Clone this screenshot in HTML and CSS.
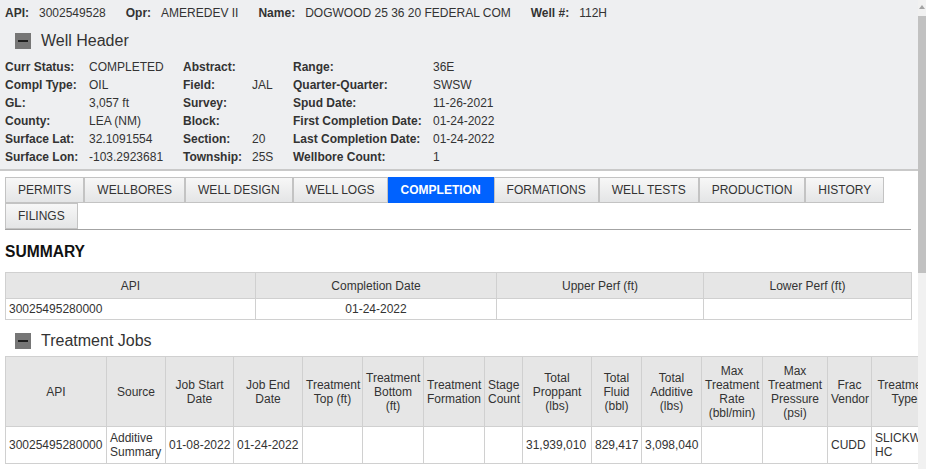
FILE: index.html
```html
<!DOCTYPE html>
<html lang="en">
<head>
    <meta charset="UTF-8">
    <meta name="viewport" content="width=device-width, initial-scale=1.0">
    <title>Well Detail - Completion</title>
    <link rel="stylesheet" href="styles.css">
</head>
<body>
<div class="page">
    <div class="content">

        <div class="well-top">
            <div class="id-line">
                <b>API:</b><span>3002549528</span>
                <b>Opr:</b><span>AMEREDEV II</span>
                <b>Name:</b><span>DOGWOOD 25 36 20 FEDERAL COM</span>
                <b>Well #:</b><span>112H</span>
            </div>

            <div class="section-title">
                <span class="minus"></span>
                <span>Well Header</span>
            </div>

            <div class="fields">
                <b>Curr Status:</b><span>COMPLETED</span>
                <b>Abstract:</b><span></span>
                <b>Range:</b><span>36E</span>

                <b>Compl Type:</b><span>OIL</span>
                <b>Field:</b><span>JAL</span>
                <b>Quarter-Quarter:</b><span>SWSW</span>

                <b>GL:</b><span>3,057 ft</span>
                <b>Survey:</b><span></span>
                <b>Spud Date:</b><span>11-26-2021</span>

                <b>County:</b><span>LEA (NM)</span>
                <b>Block:</b><span></span>
                <b>First Completion Date:</b><span>01-24-2022</span>

                <b>Surface Lat:</b><span>32.1091554</span>
                <b>Section:</b><span>20</span>
                <b>Last Completion Date:</b><span>01-24-2022</span>

                <b>Surface Lon:</b><span>-103.2923681</span>
                <b>Township:</b><span>25S</span>
                <b>Wellbore Count:</b><span>1</span>
            </div>
        </div>

        <div class="main">
            <div class="tabs">
                <div class="tab">Permits</div>
                <div class="tab">Wellbores</div>
                <div class="tab">Well Design</div>
                <div class="tab">Well Logs</div>
                <div class="tab active">Completion</div>
                <div class="tab">Formations</div>
                <div class="tab">Well Tests</div>
                <div class="tab">Production</div>
                <div class="tab">History</div>
                <div class="tab">Filings</div>
            </div>

            <h2 class="summary-title">SUMMARY</h2>

            <table class="grid summary">
                <colgroup>
                    <col style="width:250px">
                    <col style="width:241px">
                    <col style="width:207px">
                    <col style="width:208px">
                </colgroup>
                <thead>
                    <tr>
                        <th>API</th>
                        <th>Completion Date</th>
                        <th>Upper Perf (ft)</th>
                        <th>Lower Perf (ft)</th>
                    </tr>
                </thead>
                <tbody>
                    <tr>
                        <td>30025495280000</td>
                        <td class="center">01-24-2022</td>
                        <td></td>
                        <td></td>
                    </tr>
                </tbody>
            </table>

            <div class="section-title jobs-title">
                <span class="minus"></span>
                <span>Treatment Jobs</span>
            </div>

            <table class="grid jobs">
                <colgroup>
                    <col style="width:101px">
                    <col style="width:59px">
                    <col style="width:68px">
                    <col style="width:69px">
                    <col style="width:60px">
                    <col style="width:61px">
                    <col style="width:61px">
                    <col style="width:38px">
                    <col style="width:69px">
                    <col style="width:50px">
                    <col style="width:60px">
                    <col style="width:61px">
                    <col style="width:65px">
                    <col style="width:44px">
                    <col style="width:66px">
                </colgroup>
                <thead>
                    <tr>
                        <th>API</th>
                        <th>Source</th>
                        <th>Job Start Date</th>
                        <th>Job End Date</th>
                        <th>Treatment Top (ft)</th>
                        <th>Treatment Bottom (ft)</th>
                        <th>Treatment Formation</th>
                        <th>Stage Count</th>
                        <th>Total Proppant (lbs)</th>
                        <th>Total Fluid (bbl)</th>
                        <th>Total Additive (lbs)</th>
                        <th>Max Treatment Rate (bbl/min)</th>
                        <th>Max Treatment Pressure (psi)</th>
                        <th>Frac Vendor</th>
                        <th>Treatment Type</th>
                    </tr>
                </thead>
                <tbody>
                    <tr>
                        <td>30025495280000</td>
                        <td>Additive Summary</td>
                        <td class="nowrap">01-08-2022</td>
                        <td class="nowrap">01-24-2022</td>
                        <td></td>
                        <td></td>
                        <td></td>
                        <td></td>
                        <td class="nowrap">31,939,010</td>
                        <td class="nowrap">829,417</td>
                        <td class="nowrap">3,098,040</td>
                        <td></td>
                        <td></td>
                        <td>CUDD</td>
                        <td>SLICKWATER HC</td>
                    </tr>
                </tbody>
            </table>
        </div>

    </div>

    <div class="scrollbar">
        <div class="sb-arrow"></div>
        <div class="sb-thumb"></div>
    </div>
</div>
</body>
</html>
```

FILE: styles.css
```css
body {
    margin: 0;
    font-family: "Liberation Sans", Arial, sans-serif;
    font-size: 12px;
    color: #333;
    background: #ffffff;
}
.page {
    display: flex;
    height: 100vh;
    overflow: hidden;
}
.content {
    flex: 1;
    min-width: 0;
    overflow: hidden;
}

/* top header block */
.well-top {
    background: #eeeff1;
    padding: 6px 0 3px 5px;
    border-bottom: 2px solid #c9c9c9;
}
.id-line {
    display: flex;
    line-height: 14px;
}
.id-line b {
    margin-right: 10px;
}
.id-line span {
    margin-right: 20px;
}
.section-title {
    display: flex;
    align-items: center;
    gap: 10px;
    height: 18px;
    margin: 12px 0 0 10px;
    font-size: 16px;
    line-height: 18px;
    color: #333;
}
.minus {
    width: 16px;
    height: 16px;
    background: #767676;
    display: flex;
    align-items: center;
    justify-content: center;
}
.minus::before {
    content: "";
    width: 10px;
    height: 2px;
    background: #1e1e1e;
}
.fields {
    display: grid;
    grid-template-columns: 84px 94px 69px 41px 140px auto;
    grid-auto-rows: 18px;
    line-height: 18px;
    margin-top: 8px;
}

/* lower area */
.main {
    padding: 0 7px 0 5px;
}
.tabs {
    display: flex;
    flex-wrap: wrap;
    margin-top: 6px;
    border-bottom: 1px solid #a3a3a3;
}
.tab {
    box-sizing: border-box;
    height: 26px;
    line-height: 24px;
    padding: 0 12px;
    border: 1px solid #c3c3c3;
    background: linear-gradient(#f7f7f7, #e4e5e6);
    text-transform: uppercase;
    color: #333;
    white-space: nowrap;
}
.tab.active {
    background: #0062ff;
    border-color: #0062ff;
    color: #fff;
    font-weight: bold;
}
.summary-title {
    margin: 13px 0 11px;
    font-size: 15.6px;
    line-height: 18px;
    font-weight: bold;
    color: #111;
}

/* tables */
.grid {
    border-collapse: collapse;
    table-layout: fixed;
    line-height: 14px;
}
.grid th,
.grid td {
    border: 1px solid #d0d0d0;
    box-sizing: border-box;
}
.grid th {
    background: #e6e6e6;
    font-weight: normal;
    text-align: center;
    vertical-align: middle;
}
.grid td {
    text-align: left;
    vertical-align: middle;
}
.grid td.center {
    text-align: center;
}
.grid td.nowrap {
    white-space: nowrap;
}
.summary {
    width: 906px;
}
.summary th {
    padding: 6px 4px 5px;
}
.summary td {
    padding: 3px 3px;
    height: 21px;
}
.jobs-title {
    margin-left: 10px;
}
.jobs {
    width: 932px;
    margin-top: 6px;
}
.jobs th {
    padding: 7px 3px 6px;
}
.jobs td {
    padding: 4px 3px;
}

/* fake scrollbar */
.scrollbar {
    flex: none;
    width: 8px;
    background: #f1f1f1;
}
.sb-arrow {
    height: 16px;
    display: flex;
    justify-content: center;
    align-items: flex-start;
    padding-top: 5px;
    box-sizing: border-box;
}
.sb-arrow::before {
    content: "";
    border-left: 3px solid transparent;
    border-right: 3px solid transparent;
    border-bottom: 4px solid #a3a3a3;
}
.sb-thumb {
    height: 257px;
    background: #c1c1c1;
}
```
